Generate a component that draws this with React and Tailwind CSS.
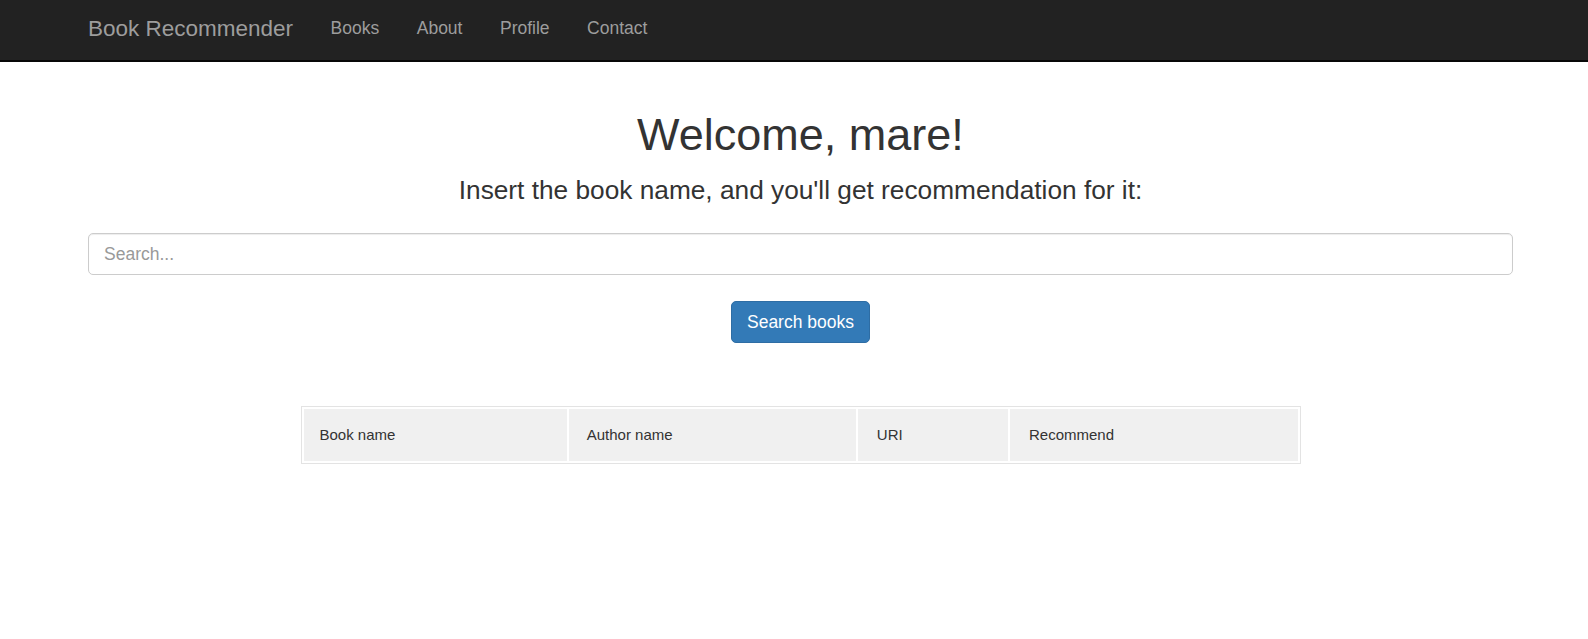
import React from "react";

const font = { fontFamily: '"Liberation Sans", Arial, Helvetica, sans-serif' };

export default function App() {
  const links = ["Books", "About", "Profile", "Contact"];
  const cols = [
    { label: "Book name", w: "w-[265px]", p: "pl-[16px]" },
    { label: "Author name", w: "w-[289px]", p: "pl-[18px]" },
    { label: "URI", w: "w-[151px]", p: "pl-[19px]" },
    { label: "Recommend", w: "w-[289px]", p: "pl-[19px]" },
  ];
  return (
    <div className="min-h-[639px] bg-white text-[#333]" style={font}>
      <nav className="h-[62px] bg-[#222] border-b-2 border-[#080808]">
        <div className="ml-[88px] flex h-full items-center pb-[4px]">
          <a className="text-[22.5px] leading-[25px] text-[#9d9d9d] mr-[37.5px]">Book Recommender</a>
          <ul className="flex items-center gap-[37.5px]">
            {links.map((l) => (
              <li key={l} className="text-[17.5px] leading-[25px] text-[#9d9d9d]">
                {l}
              </li>
            ))}
          </ul>
        </div>
      </nav>

      <main className="ml-[88px] w-[1425px] text-center">
        <h1 className="mt-[48px] text-[45px] leading-[49.5px] font-normal text-[#333]">Welcome, mare!</h1>
        <h2 className="mt-[16px] text-[26.25px] leading-[28.6px] font-normal text-[#333]">
          Insert the book name, and you'll get recommendation for it:
        </h2>
        <input
          type="text"
          placeholder="Search..."
          className="mt-[29px] block h-[42px] w-full rounded-[5px] border border-[#ccc] px-[15px] text-[17.5px] text-[#555] placeholder:text-[#999] shadow-[inset_0_1px_1px_rgba(0,0,0,0.075)] outline-none"
        />
        <button className="mt-[26px] h-[42px] rounded-[5px] border border-[#2e6da4] bg-[#337ab7] px-[15px] text-[17.5px] leading-[25px] text-white">
          Search books
        </button>
        <table className="mx-auto mt-[63px] w-[1000px] border border-[#e3e3e3] border-separate [border-spacing:2px] text-left">
          <thead>
            <tr>
              {cols.map((c) => (
                <th
                  key={c.label}
                  className={`${c.w} ${c.p} h-[52px] bg-[#f0f0f0] pr-[18px] text-[15px] font-normal text-[#333]`}
                >
                  {c.label}
                </th>
              ))}
            </tr>
          </thead>
        </table>
      </main>
    </div>
  );
}
